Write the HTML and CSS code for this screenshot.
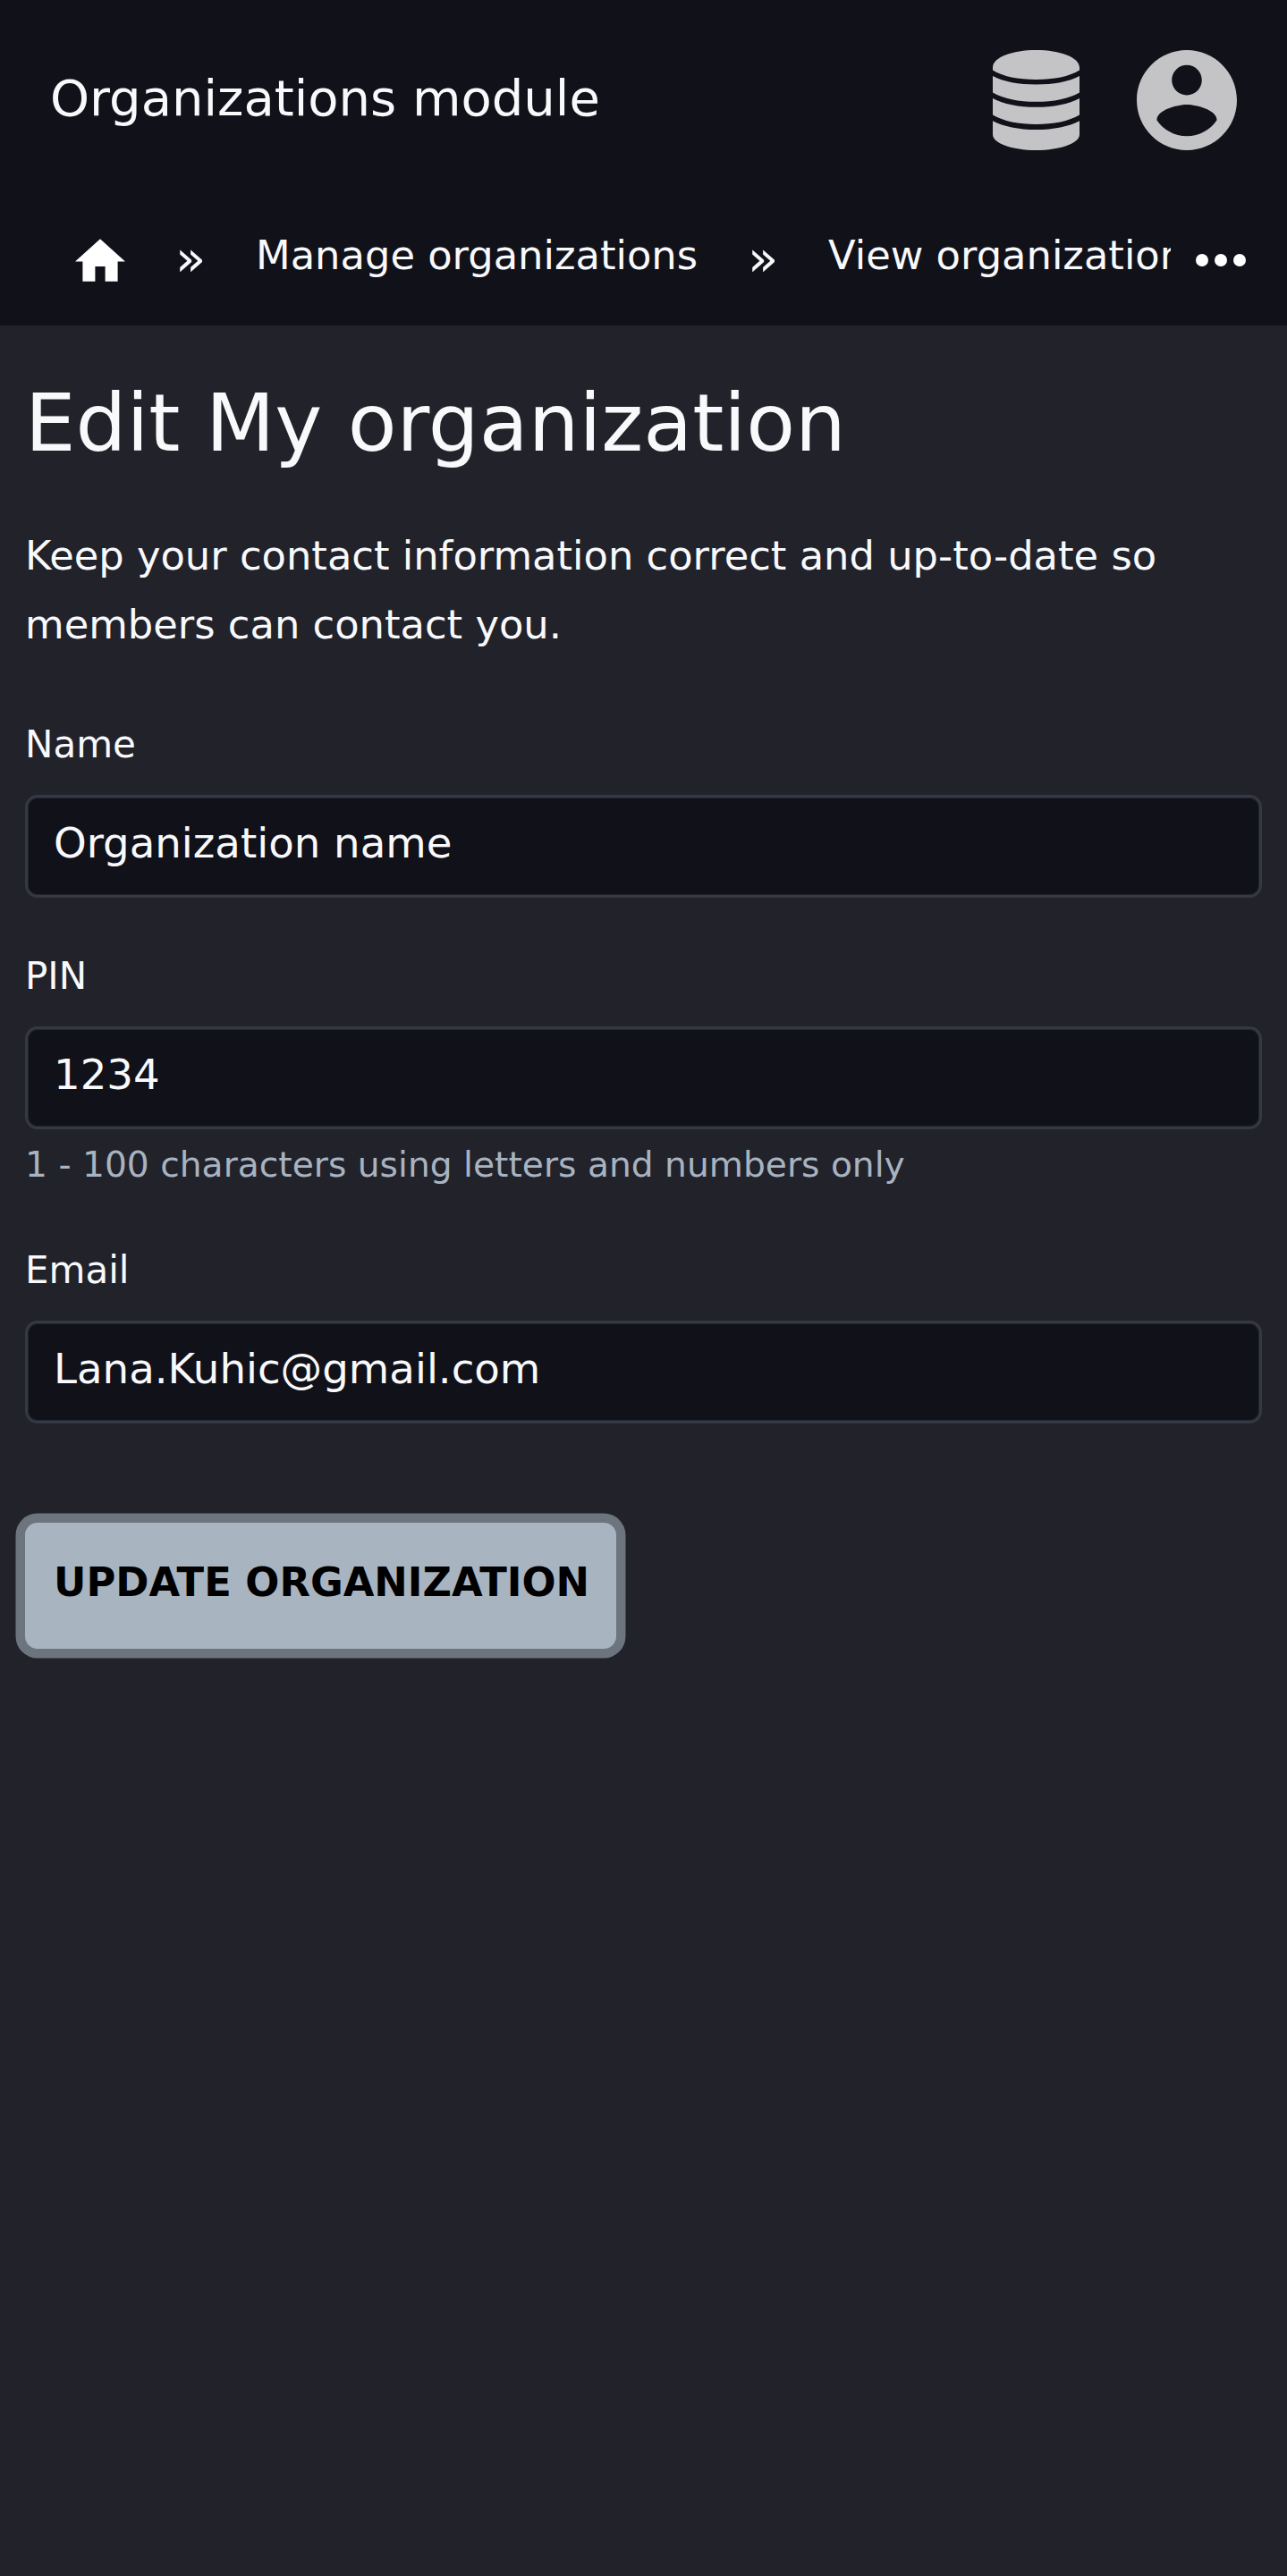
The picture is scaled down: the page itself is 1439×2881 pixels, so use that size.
FILE: index.html
```html
<!DOCTYPE html>
<html lang="en">
<head>
<meta charset="utf-8">
<title>Edit My organization</title>
<link rel="stylesheet" href="styles.css">
</head>
<body>
<header class="header">
  <div class="topbar">
    <span class="brand">Organizations module</span>
    <div class="actions">
      <svg class="icon-db" viewBox="0 0 97 112" aria-hidden="true"><path d="M0 19.500C0 8 22 0 48.500 0S97 8 97 19.500V22.500C86 29.500 68 33 48.500 33S11 29.500 0 22.500ZM0 29C12 35.500 29 38.500 48.500 38.500S85 35.500 97 29V47.500C85 54.500 68 57.800 48.500 57.800S12 54.500 0 47.500ZM0 54C12 60.500 29 63.800 48.500 63.800S85 60.500 97 54V72.500C85 79.500 68 83 48.500 83S12 79.500 0 72.500ZM0 79.200C12 85.500 29 89 48.500 89S85 85.500 97 79.200V94.500C97 104 76 112 48.500 112S0 104 0 94.500Z"/></svg>
      <svg class="icon-user" viewBox="2 2 20 20" aria-hidden="true"><path d="M12 2C6.480 2 2 6.480 2 12s4.480 10 10 10 10-4.480 10-10S17.520 2 12 2zm0 3c1.660 0 3 1.340 3 3s-1.340 3-3 3-3-1.340-3-3 1.340-3 3-3zm0 14.200c-2.500 0-4.710-1.280-6-3.220.03-1.990 4-3.080 6-3.080 1.990 0 5.970 1.090 6 3.080-1.290 1.940-3.500 3.220-6 3.220z"/></svg>
    </div>
  </div>
  <nav class="crumbs">
    <div class="trail">
      <svg class="icon-home" viewBox="2 3 20 17" aria-hidden="true"><path d="M10 20v-6h4v6h5v-8h3L12 3 2 12h3v8z"/></svg>
      <span class="sep">»</span>
      <a class="crumb">Manage organizations</a>
      <span class="sep">»</span>
      <a class="crumb">View organization</a>
    </div>
    <svg class="icon-more" viewBox="4 10 16 4" aria-hidden="true"><circle cx="6" cy="12" r="2"/><circle cx="12" cy="12" r="2"/><circle cx="18" cy="12" r="2"/></svg>
  </nav>
</header>
<main class="main">
  <h1 class="title">Edit My organization</h1>
  <p class="intro">Keep your contact information correct and up-to-date so members can contact you.</p>
  <form class="form">
    <div class="field">
      <label class="label" for="name">Name</label>
      <input class="input" id="name" type="text" value="Organization name">
    </div>
    <div class="field">
      <label class="label" for="pin">PIN</label>
      <input class="input" id="pin" type="text" value="1234">
      <small class="help">1 - 100 characters using letters and numbers only</small>
    </div>
    <div class="field">
      <label class="label" for="email">Email</label>
      <input class="input" id="email" type="text" value="Lana.Kuhic@gmail.com">
    </div>
    <button class="submit" type="button">UPDATE ORGANIZATION</button>
  </form>
</main>
</body>
</html>
```
FILE: styles.css
```css
* { box-sizing: border-box; }

body {
  margin: 0;
  min-height: 2881px;
  background: #22222b;
  color: #f8f9fb;
  font-family: "DejaVu Sans", sans-serif;
  font-size: 44.8px;
}

.header { background: #11111a; }

.topbar {
  display: flex;
  align-items: center;
  justify-content: space-between;
  height: 224px;
  padding: 0 56px;
}

.brand {
  padding-bottom: 5px;
  font-size: 56px;
  line-height: 65px;
}

.actions {
  display: flex;
  gap: 64px;
  fill: #c4c4c6;
}

.icon-db { width: 97px; height: 112px; }
.icon-user { width: 112px; height: 112px; }

.crumbs {
  display: flex;
  align-items: center;
  height: 140px;
  padding: 0 46px 7px 84px;
  fill: #fff;
}

.trail {
  display: flex;
  flex: 1;
  align-items: center;
  min-width: 0;
  overflow: hidden;
  white-space: nowrap;
}

.icon-home {
  flex: none;
  width: 56px;
  height: 48px;
}

.sep {
  flex: none;
  width: 34px;
  margin: 0 56px;
  padding-bottom: 4px;
  font-size: 56px;
  line-height: 66px;
}

.crumb {
  flex: none;
  padding-bottom: 10px;
  line-height: 66px;
}

.icon-more {
  flex: none;
  width: 56px;
  height: 14px;
  margin-left: 28px;
}

.main { padding: 57px 28px 0; }

.title {
  margin: 0 0 59px;
  font-size: 89.6px;
  font-weight: 400;
  line-height: 104px;
}

.intro {
  margin: 0 0 66px;
  line-height: 76.700px;
}

.field {
  display: flex;
  flex-direction: column;
  margin-bottom: 57px;
}

.label {
  margin-bottom: 26px;
  font-size: 42px;
  line-height: 60px;
}

.field + .field .label { padding-top: 1px; }

.input {
  width: 100%;
  height: 115px;
  padding: 0 29px 7px;
  border: 3px solid #343943;
  border-radius: 14px;
  outline: none;
  background: #11111a;
  box-shadow: inset 0 0 0 1px #23262f;
  color: inherit;
  font-family: inherit;
  font-size: 46.667px;
}

.help {
  margin: 15px 0 5px;
  color: #a8b3c0;
  font-size: 39.2px;
  line-height: 50px;
}

.submit {
  height: 141px;
  margin-top: 54px;
  padding: 0 30px 9px 32px;
  border: 0;
  border-radius: 14px;
  background: #a9b4c1;
  box-shadow: 0 0 0 10.500px #6c747e;
  color: #000;
  font-family: inherit;
  font-size: 44.8px;
  font-weight: 700;
}
```
